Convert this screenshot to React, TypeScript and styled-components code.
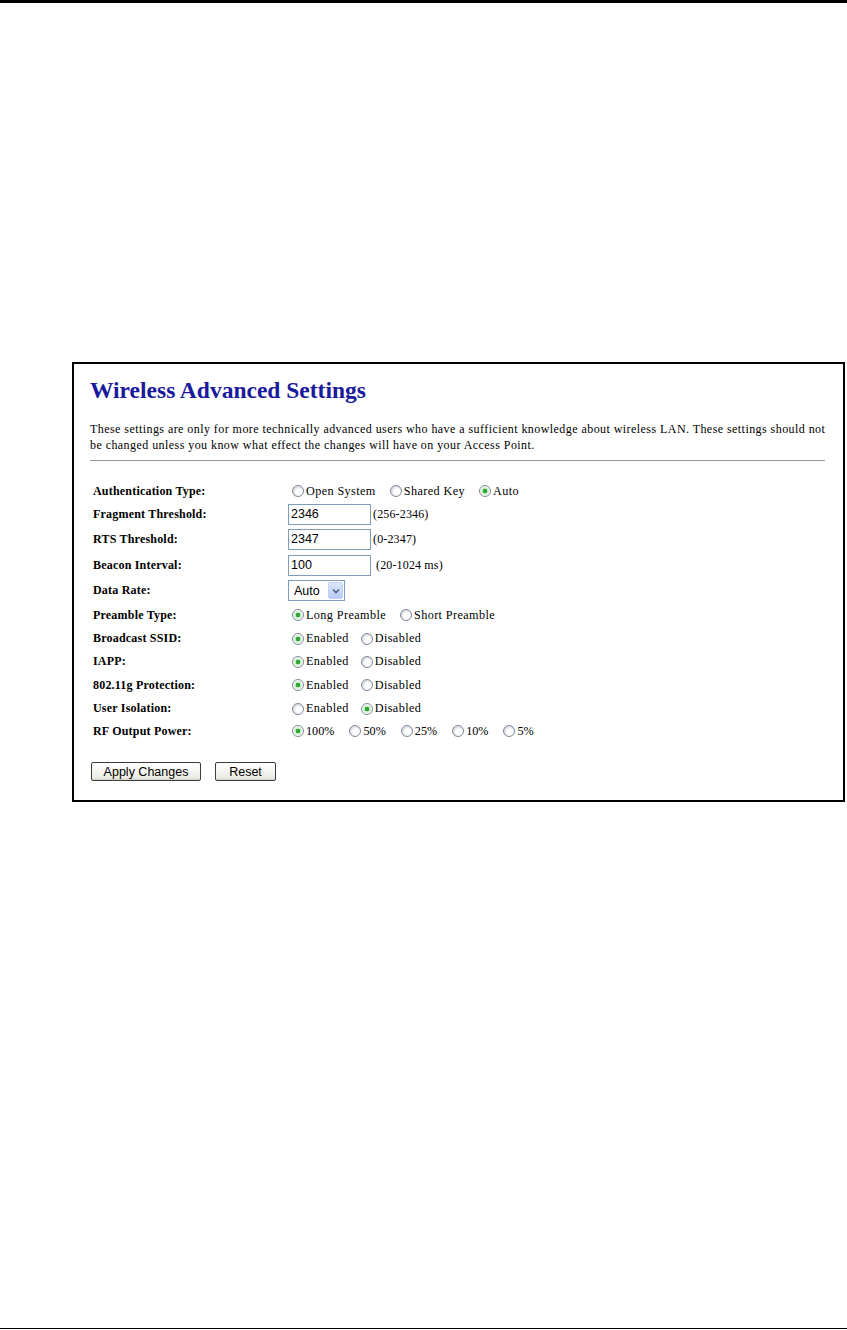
import React from "react";
import styled, { createGlobalStyle } from "styled-components";

const GlobalStyle = createGlobalStyle`
  html, body {
    margin: 0;
    padding: 0;
    background: #fff;
  }
  body {
    font-family: "Liberation Serif", "Times New Roman", serif;
    color: #000;
  }
`;

const Page = styled.div`
  width: 847px;
  height: 1330px;
  display: flex;
  flex-direction: column;
  overflow: hidden;
`;

const TopRule = styled.div`
  height: 3px;
  background: #000;
`;

const BottomRule = styled.div`
  height: 1px;
  background: #000;
  margin-top: auto;
  margin-bottom: 1px;
`;

const Frame = styled.div`
  margin: 359px 0 0 72px;
  width: 773px;
  height: 440px;
  box-sizing: border-box;
  border: 2px solid #000;
  padding: 12px 12px 0 16px;
`;

const Title = styled.h1`
  margin: 0;
  font-family: "Liberation Serif", "Times New Roman", serif;
  font-weight: bold;
  font-size: 23.5px;
  line-height: 28px;
  color: #1a1a9c;
`;

const Intro = styled.p`
  margin: 17px 0 0 0;
  font-size: 12px;
  letter-spacing: 0.44px;
  line-height: 16px;
  white-space: nowrap;
`;

const Divider = styled.hr`
  margin: 7px 6px 0 0;
  border: none;
  height: 1px;
  background: #9a9a9a;
`;

const Form = styled.div`
  margin-top: 19px;
  padding-left: 3px;
  display: grid;
  grid-template-columns: 195px 1fr;
`;

const Label = styled.div<{ $h: number }>`
  height: ${(p) => p.$h}px;
  display: flex;
  align-items: center;
  font-weight: bold;
  font-size: 12px;
  letter-spacing: 0.2px;
`;

const Field = styled.div<{ $h: number }>`
  height: ${(p) => p.$h}px;
  display: flex;
  align-items: center;
`;

const RadioGroup = styled.div<{ $gap: number }>`
  display: flex;
  align-items: center;
  gap: ${(p) => p.$gap}px;
  padding-left: 4px;
`;

const RadioItem = styled.label<{ $tight?: boolean }>`
  display: flex;
  align-items: center;
  gap: 2px;
  white-space: nowrap;
  font-size: 12.2px;
  letter-spacing: ${(p) => (p.$tight ? 0 : 0.4)}px;
`;

const RadioDot = styled.span<{ $on?: boolean }>`
  width: 12px;
  height: 12px;
  box-sizing: border-box;
  border-radius: 50%;
  border: 1px solid #7f8a99;
  background: ${(p) =>
    p.$on
      ? "radial-gradient(circle, #2fa82f 0 2px, #bfe6bf 2.5px, #ffffff 5px)"
      : "radial-gradient(circle at 60% 60%, #ffffff 0 3px, #dcdce4 5.5px)"};
`;

const TextBox = styled.div`
  width: 83px;
  height: 21px;
  box-sizing: border-box;
  border: 1px solid #7f9db9;
  font-family: "Liberation Sans", Arial, sans-serif;
  font-size: 12.5px;
  line-height: 19px;
  padding-left: 2px;
`;

const Hint = styled.span<{ $gap?: number }>`
  margin-left: ${(p) => p.$gap ?? 2}px;
  font-size: 12px;
  letter-spacing: 0.15px;
`;

const Select = styled.div`
  width: 57px;
  height: 21px;
  box-sizing: border-box;
  border: 1px solid #7f9db9;
  display: flex;
  align-items: center;
  justify-content: space-between;
  font-family: "Liberation Sans", Arial, sans-serif;
  font-size: 12.5px;
  padding: 0 1px 0 5px;
`;

const Arrow = styled.span`
  width: 15px;
  height: 17px;
  border-radius: 2px;
  background: linear-gradient(#dbe6fb, #b7cbf3);
  border: 1px solid #c3d3fd;
  box-sizing: border-box;
  display: flex;
  align-items: center;
  justify-content: center;
`;

const Buttons = styled.div`
  margin-top: 20px;
  display: flex;
  gap: 14px;
  padding-left: 1px;
`;

const Button = styled.button<{ $w: number }>`
  width: ${(p) => p.$w}px;
  height: 19px;
  padding: 0;
  border: 1px solid #3c3c3c;
  border-radius: 2px;
  background: linear-gradient(#ffffff, #ecece6 85%, #d6d0c5);
  font-family: "Liberation Sans", Arial, sans-serif;
  font-size: 12.5px;
  color: #000;
`;

type Opt = { text: string; on?: boolean };

const Radios: React.FC<{ opts: Opt[]; gap?: number; tight?: boolean }> = ({
  opts,
  gap = 12,
  tight,
}) => (
  <RadioGroup $gap={gap}>
    {opts.map((o) => (
      <RadioItem key={o.text} $tight={tight}>
        <RadioDot $on={o.on} />
        {o.text}
      </RadioItem>
    ))}
  </RadioGroup>
);

const en = (enabled: boolean): Opt[] => [
  { text: "Enabled", on: enabled },
  { text: "Disabled", on: !enabled },
];

const App: React.FC = () => {
  return (
    <Page>
      <GlobalStyle />
      <TopRule />
      <Frame>
        <Title>Wireless Advanced Settings</Title>
        <Intro>
          These settings are only for more technically advanced users who have a sufficient
          knowledge about wireless LAN. These settings should not
          <br />
          be changed unless you know what effect the changes will have on your Access Point.
        </Intro>
        <Divider />
        <Form>
          <Label $h={22}>Authentication Type:</Label>
          <Field $h={22}>
            <Radios
              gap={14}
              opts={[{ text: "Open System" }, { text: "Shared Key" }, { text: "Auto", on: true }]}
            />
          </Field>

          <Label $h={25}>Fragment Threshold:</Label>
          <Field $h={25}>
            <TextBox>2346</TextBox>
            <Hint>(256-2346)</Hint>
          </Field>

          <Label $h={25}>RTS Threshold:</Label>
          <Field $h={25}>
            <TextBox>2347</TextBox>
            <Hint>(0-2347)</Hint>
          </Field>

          <Label $h={26}>Beacon Interval:</Label>
          <Field $h={26}>
            <TextBox>100</TextBox>
            <Hint $gap={5}>(20-1024 ms)</Hint>
          </Field>

          <Label $h={25}>Data Rate:</Label>
          <Field $h={25}>
            <Select>
              Auto
              <Arrow>
                <svg width="8" height="6" viewBox="0 0 8 6">
                  <path d="M1 1.5 L4 4.5 L7 1.5" stroke="#4d6185" strokeWidth="1.6" fill="none" />
                </svg>
              </Arrow>
            </Select>
          </Field>

          <Label $h={24}>Preamble Type:</Label>
          <Field $h={24}>
            <Radios
              gap={14}
              opts={[{ text: "Long Preamble", on: true }, { text: "Short Preamble" }]}
            />
          </Field>

          <Label $h={23}>Broadcast SSID:</Label>
          <Field $h={23}>
            <Radios opts={en(true)} />
          </Field>

          <Label $h={23}>IAPP:</Label>
          <Field $h={23}>
            <Radios opts={en(true)} />
          </Field>

          <Label $h={24}>802.11g Protection:</Label>
          <Field $h={24}>
            <Radios opts={en(true)} />
          </Field>

          <Label $h={23}>User Isolation:</Label>
          <Field $h={23}>
            <Radios opts={en(false)} />
          </Field>

          <Label $h={22}>RF Output Power:</Label>
          <Field $h={22}>
            <Radios
              gap={15}
              tight
              opts={[
                { text: "100%", on: true },
                { text: "50%" },
                { text: "25%" },
                { text: "10%" },
                { text: "5%" },
              ]}
            />
          </Field>
        </Form>
        <Buttons>
          <Button $w={110}>Apply Changes</Button>
          <Button $w={61}>Reset</Button>
        </Buttons>
      </Frame>
      <BottomRule />
    </Page>
  );
};

export default App;
